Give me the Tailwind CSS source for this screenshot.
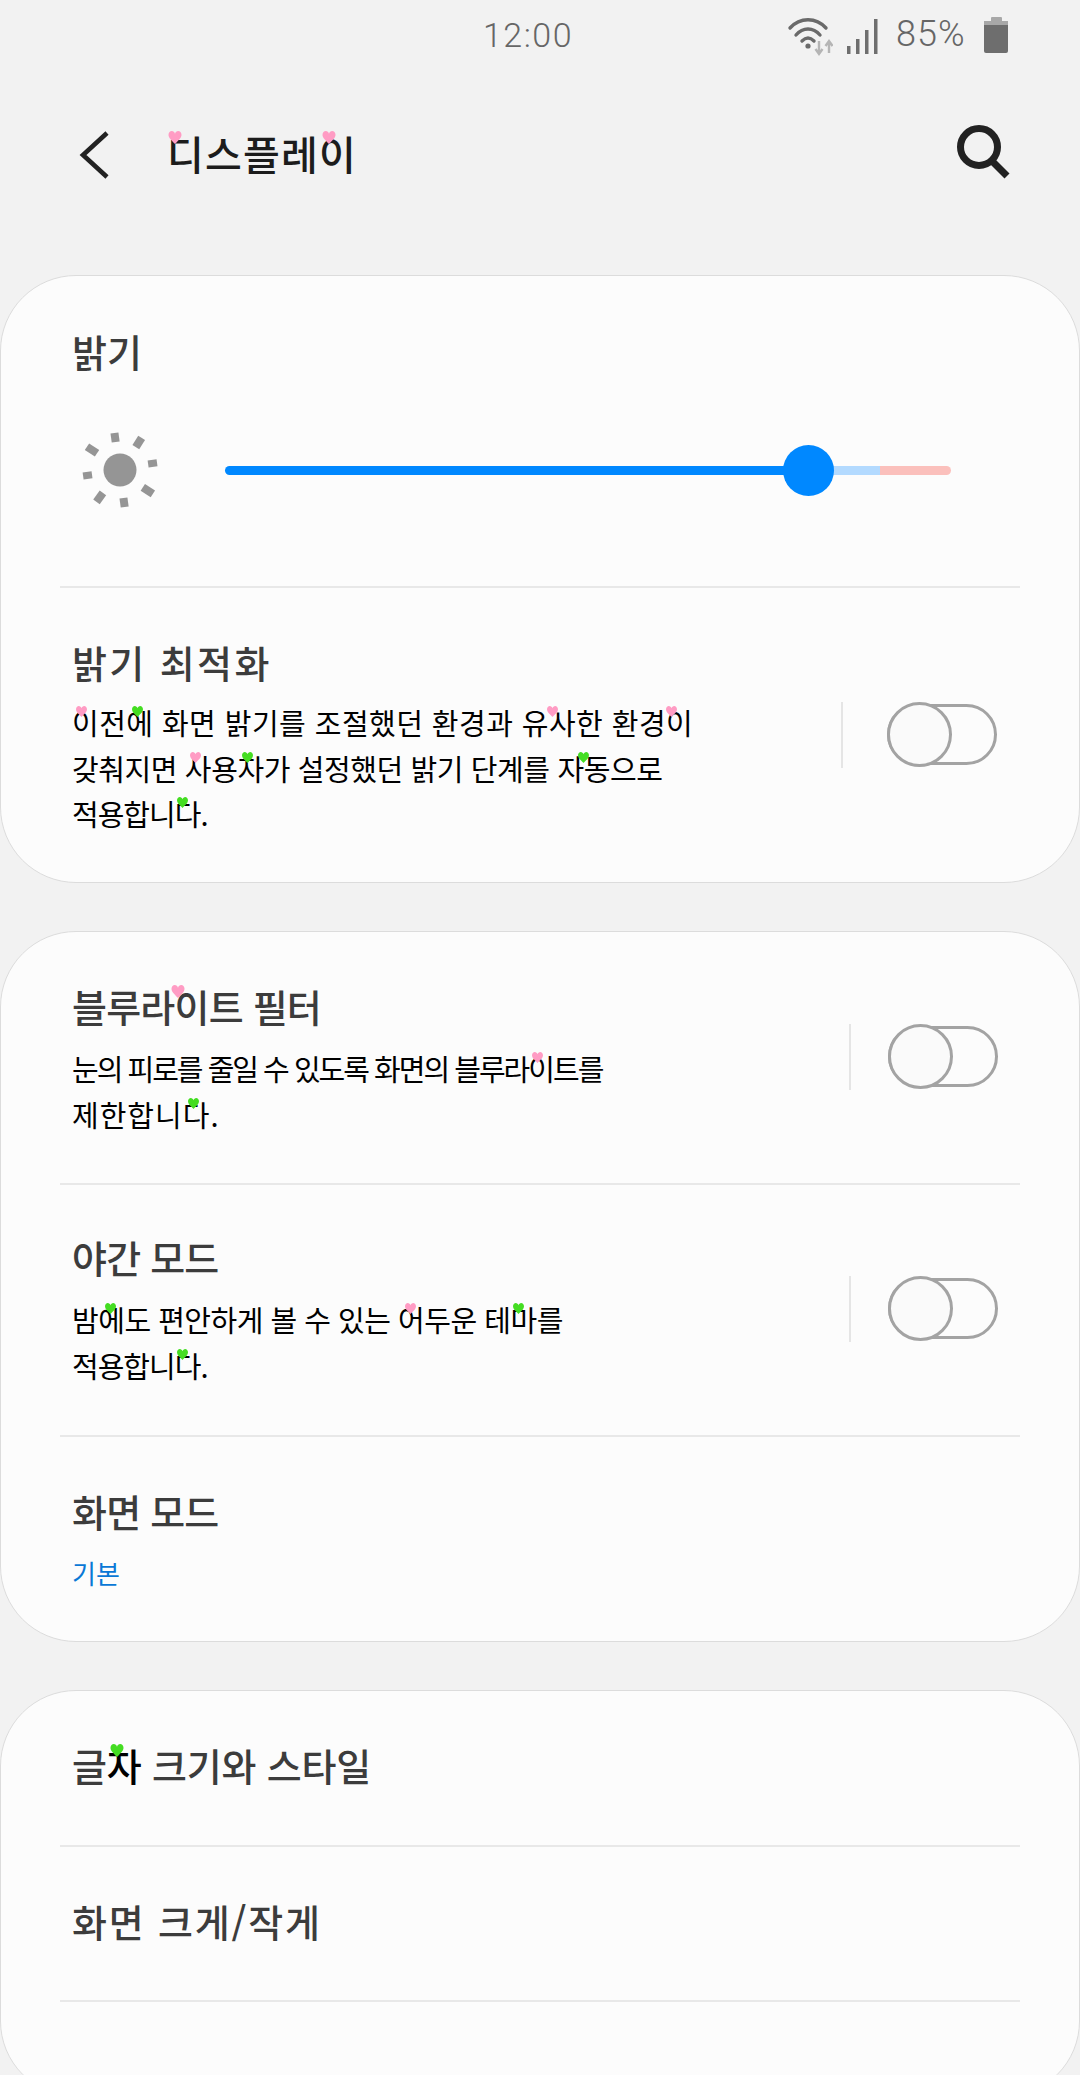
<!DOCTYPE html>
<html lang="ko">
<head>
<meta charset="utf-8">
<script src="https://cdn.jsdelivr.net/npm/@tailwindcss/browser@4"></script>
<title>디스플레이</title>
</head>
<body class="m-0">
<div class="w-[1080px] h-[2075px] overflow-hidden bg-[#f2f2f2] font-['Noto_Sans_CJK_KR','Noto_Sans',sans-serif]">

  <!-- status bar -->
  <div class="h-[70px] flex items-start relative">
    <div class="ml-[483px] mt-[12px] w-[90px] text-[34px] leading-[46px] font-['Roboto',sans-serif] font-light text-[#666666] tracking-[1.5px]">12:00</div>
    <svg class="ml-[214px] mt-[15px]" width="46" height="42" viewBox="0 0 46 42" fill="none">
      <path d="M3 13 C13 2 29 2 39 13" stroke="#6a6a6a" stroke-width="3.4" stroke-linecap="round"/>
      <path d="M9 20 C16 12 26 12 33 20" stroke="#6a6a6a" stroke-width="3.4" stroke-linecap="round"/>
      <path d="M15 26 C19 22 23 22 27 26" stroke="#6a6a6a" stroke-width="3.4" stroke-linecap="round"/>
      <circle cx="21" cy="31" r="2.6" fill="#6a6a6a"/>
      <path d="M32 26 V38 M28.5 34 L32 39 L35.5 34" stroke="#b5b5b5" stroke-width="2.4"/>
      <path d="M42 38 V27 M38.5 31 L42 26 L45.5 31" stroke="#b5b5b5" stroke-width="2.4"/>
    </svg>
    <svg class="ml-[13px] mt-[19px]" width="32" height="35" viewBox="0 0 32 35" fill="#6e6e6e">
      <rect x="1" y="27" width="3.5" height="8"/>
      <rect x="10" y="20" width="3.5" height="15"/>
      <rect x="19" y="11" width="3.5" height="24"/>
      <rect x="28" y="0" width="3.5" height="35"/>
    </svg>
    <div class="ml-[18px] mt-[11px] w-[71px] text-[36px] leading-[46px] font-['Roboto',sans-serif] font-light text-[#666666] tracking-[1px] whitespace-nowrap">85%</div>
    <div class="ml-[17px] mt-[17px] w-[24px] h-[36px] flex flex-col items-center">
      <div class="w-[11px] h-[4px] bg-[#a8a8a8] rounded-t-[1px]"></div>
      <div class="w-[24px] h-[4px] bg-[#a8a8a8]"></div>
      <div class="w-[24px] h-[28px] bg-[#6e6e6e] rounded-b-[2px]"></div>
    </div>
  </div>

  <!-- header -->
  <div class="h-[205px] flex items-start">
    <svg class="ml-[78px] mt-[60px]" width="32" height="50" viewBox="0 0 32 50" fill="none">
      <path d="M29 3 L5 25 L29 47" stroke="#222222" stroke-width="4.6"/>
    </svg>
    <div class="ml-[57px] mt-[53px] w-[190px] text-[40px] leading-[60px] font-medium text-[#1c1c1c] tracking-[1.2px] whitespace-nowrap">
      <span class="relative">디<svg class="absolute left-[1px] top-[7px]" width="14" height="13" viewBox="0 0 12 12"><path fill="#ff9cc4" d="M6 12 C2 8 0 6 0 3.5 C0 1.5 1.5 0 3 0 C4.5 0 5.5 1 6 2.5 C6.5 1 7.5 0 9 0 C10.5 0 12 1.5 12 3.5 C12 6 10 8 6 12Z"/></svg></span>스플레<span class="relative">이<svg class="absolute left-[3px] top-[7px]" width="14" height="13" viewBox="0 0 12 12"><path fill="#ff9cc4" d="M6 12 C2 8 0 6 0 3.5 C0 1.5 1.5 0 3 0 C4.5 0 5.5 1 6 2.5 C6.5 1 7.5 0 9 0 C10.5 0 12 1.5 12 3.5 C12 6 10 8 6 12Z"/></svg></span>
    </div>
    <svg class="ml-[598px] mt-[53px]" width="56" height="56" viewBox="0 0 56 56" fill="none">
      <circle cx="24" cy="24" r="18.5" stroke="#222222" stroke-width="7"/>
      <path d="M36 37 L52 53" stroke="#222222" stroke-width="7"/>
    </svg>
  </div>

  <!-- card 1 -->
  <div class="h-[608px] bg-[#fcfcfc] border border-[#dcdcdc] rounded-[76px] px-[59px]">
    <div class="h-[312px] border-b-2 border-[#e8e8e8] pt-[45px]">
      <div class="text-[38px] leading-[60px] font-medium text-[#3c3c3c] ml-[12px] tracking-[0px]">밝기</div>
      <div class="mt-[59px] flex items-center h-[60px]">
        <svg class="ml-[20px]" width="80" height="80" viewBox="0 0 80 80" fill="#959595">
          <circle cx="40" cy="40" r="16.5"/>
          <rect x="31" y="3" width="8" height="9" transform="rotate(-8 35 7)"/>
          <rect x="55" y="7" width="8" height="11" transform="rotate(32 59 12)"/>
          <rect x="68" y="30" width="9" height="7" transform="rotate(-8 72 33)"/>
          <rect x="63" y="55" width="8" height="12" transform="rotate(-57 67 60)"/>
          <rect x="40" y="68" width="8" height="9" transform="rotate(-8 44 72)"/>
          <rect x="16" y="62" width="8" height="11" transform="rotate(36 20 67)"/>
          <rect x="3" y="42" width="9" height="7" transform="rotate(-8 7 45)"/>
          <rect x="8" y="14" width="8" height="12" transform="rotate(-57 12 20)"/>
        </svg>
        <div class="ml-[65px] relative w-[726px] h-[9px] flex rounded-full">
          <div class="w-[584px] bg-[#0088ff] rounded-l-full"></div>
          <div class="w-[71px] bg-[#b3daff]"></div>
          <div class="w-[71px] bg-[#fbc0bc] rounded-r-full"></div>
          <div class="absolute left-[558px] top-[-21px] w-[51px] h-[51px] rounded-full bg-[#0088ff]"></div>
        </div>
      </div>
    </div>
    <div class="flex items-start">
      <div class="ml-[12px] pt-[44px] w-[780px] shrink-0">
        <div class="text-[38px] leading-[60px] font-medium text-[#3c3c3c] tracking-[2.4px]">밝기 최적화</div>
        <div class="text-[29px] leading-[45.5px] text-black whitespace-nowrap mt-[8px]">
          <div class="tracking-[0.45px]"><span class="relative">이<svg class="absolute left-[4px] top-[5px]" width="11" height="11" viewBox="0 0 12 12"><path fill="#ff9cc4" d="M6 12 C2 8 0 6 0 3.5 C0 1.5 1.5 0 3 0 C4.5 0 5.5 1 6 2.5 C6.5 1 7.5 0 9 0 C10.5 0 12 1.5 12 3.5 C12 6 10 8 6 12Z"/></svg></span>전<span class="relative">에<svg class="absolute left-[6px] top-[5px]" width="11" height="11" viewBox="0 0 12 12"><path fill="#44dd22" d="M6 12 C2 8 0 6 0 3.5 C0 1.5 1.5 0 3 0 C4.5 0 5.5 1 6 2.5 C6.5 1 7.5 0 9 0 C10.5 0 12 1.5 12 3.5 C12 6 10 8 6 12Z"/></svg></span> 화면 밝기를 조절했던 환경과 유<span class="relative">사<svg class="absolute left-[-2px] top-[5px]" width="11" height="11" viewBox="0 0 12 12"><path fill="#ff9cc4" d="M6 12 C2 8 0 6 0 3.5 C0 1.5 1.5 0 3 0 C4.5 0 5.5 1 6 2.5 C6.5 1 7.5 0 9 0 C10.5 0 12 1.5 12 3.5 C12 6 10 8 6 12Z"/></svg></span>한 환경<span class="relative">이<svg class="absolute left-[0px] top-[5px]" width="11" height="11" viewBox="0 0 12 12"><path fill="#ff9cc4" d="M6 12 C2 8 0 6 0 3.5 C0 1.5 1.5 0 3 0 C4.5 0 5.5 1 6 2.5 C6.5 1 7.5 0 9 0 C10.5 0 12 1.5 12 3.5 C12 6 10 8 6 12Z"/></svg></span></div>
          <div class="tracking-[-0.4px]">갖춰지면 <span class="relative">사<svg class="absolute left-[5px] top-[5px]" width="11" height="11" viewBox="0 0 12 12"><path fill="#ff9cc4" d="M6 12 C2 8 0 6 0 3.5 C0 1.5 1.5 0 3 0 C4.5 0 5.5 1 6 2.5 C6.5 1 7.5 0 9 0 C10.5 0 12 1.5 12 3.5 C12 6 10 8 6 12Z"/></svg></span>용<span class="relative">자<svg class="absolute left-[5px] top-[5px]" width="11" height="11" viewBox="0 0 12 12"><path fill="#44dd22" d="M6 12 C2 8 0 6 0 3.5 C0 1.5 1.5 0 3 0 C4.5 0 5.5 1 6 2.5 C6.5 1 7.5 0 9 0 C10.5 0 12 1.5 12 3.5 C12 6 10 8 6 12Z"/></svg></span>가 설정했던 밝기 단계를 <span class="relative">자<svg class="absolute left-[21px] top-[5px]" width="11" height="11" viewBox="0 0 12 12"><path fill="#44dd22" d="M6 12 C2 8 0 6 0 3.5 C0 1.5 1.5 0 3 0 C4.5 0 5.5 1 6 2.5 C6.5 1 7.5 0 9 0 C10.5 0 12 1.5 12 3.5 C12 6 10 8 6 12Z"/></svg></span>동으로</div>
          <div class="tracking-[-1px]">적용합니<span class="relative">다<svg class="absolute left-[2px] top-[5px]" width="11" height="11" viewBox="0 0 12 12"><path fill="#44dd22" d="M6 12 C2 8 0 6 0 3.5 C0 1.5 1.5 0 3 0 C4.5 0 5.5 1 6 2.5 C6.5 1 7.5 0 9 0 C10.5 0 12 1.5 12 3.5 C12 6 10 8 6 12Z"/></svg></span>.</div>
        </div>
      </div>
      <div class="w-[2px] h-[66px] bg-[#e5e5e5] mt-[114px] shrink-0 -ml-[11px]"></div>
      <div class="relative w-[110px] h-[61px] ml-[44px] mt-[116px] shrink-0 border-[3px] border-[#a3a3a3] rounded-full">
        <div class="absolute left-[-3px] top-[-5px] w-[65px] h-[65px] rounded-full border-[3.5px] border-[#a3a3a3] bg-[#fafafa]"></div>
      </div>
    </div>
  </div>

  <!-- card 2 -->
  <div class="mt-[48px] h-[711px] bg-[#fcfcfc] border border-[#dcdcdc] rounded-[76px] px-[59px]">
    <div class="h-[253px] border-b-2 border-[#e8e8e8] flex items-start">
      <div class="ml-[12px] pt-[44px] w-[788px] shrink-0">
        <div class="text-[38px] leading-[60px] font-medium text-[#3c3c3c] tracking-[-0.8px]">블루라<span class="relative">이<svg class="absolute left-[-3px] top-[7px]" width="14" height="13" viewBox="0 0 12 12"><path fill="#ff9cc4" d="M6 12 C2 8 0 6 0 3.5 C0 1.5 1.5 0 3 0 C4.5 0 5.5 1 6 2.5 C6.5 1 7.5 0 9 0 C10.5 0 12 1.5 12 3.5 C12 6 10 8 6 12Z"/></svg></span>트 필터</div>
        <div class="text-[29px] leading-[45.5px] text-black whitespace-nowrap mt-[10px]">
          <div class="tracking-[-2px]">눈의 피로를 줄일 수 있도록 화면의 블루라<span class="relative">이<svg class="absolute left-[4px] top-[5px]" width="11" height="11" viewBox="0 0 12 12"><path fill="#ff9cc4" d="M6 12 C2 8 0 6 0 3.5 C0 1.5 1.5 0 3 0 C4.5 0 5.5 1 6 2.5 C6.5 1 7.5 0 9 0 C10.5 0 12 1.5 12 3.5 C12 6 10 8 6 12Z"/></svg></span>트를</div>
          <div class="tracking-[1px]">제한합니<span class="relative">다<svg class="absolute left-[5px] top-[5px]" width="11" height="11" viewBox="0 0 12 12"><path fill="#44dd22" d="M6 12 C2 8 0 6 0 3.5 C0 1.5 1.5 0 3 0 C4.5 0 5.5 1 6 2.5 C6.5 1 7.5 0 9 0 C10.5 0 12 1.5 12 3.5 C12 6 10 8 6 12Z"/></svg></span>.</div>
        </div>
      </div>
      <div class="w-[2px] h-[66px] bg-[#e5e5e5] mt-[92px] shrink-0 -ml-[11px]"></div>
      <div class="relative w-[110px] h-[61px] ml-[37px] mt-[94px] shrink-0 border-[3px] border-[#a3a3a3] rounded-full">
        <div class="absolute left-[-3px] top-[-5px] w-[65px] h-[65px] rounded-full border-[3.5px] border-[#a3a3a3] bg-[#fafafa]"></div>
      </div>
    </div>
    <div class="h-[252px] border-b-2 border-[#e8e8e8] flex items-start">
      <div class="ml-[12px] pt-[42px] w-[788px] shrink-0">
        <div class="text-[38px] leading-[60px] font-medium text-[#3c3c3c] tracking-[-0.8px]">야간 모드</div>
        <div class="text-[29px] leading-[45.5px] text-black whitespace-nowrap mt-[10px]">
          <div class="tracking-[-0.5px]">밤<span class="relative">에<svg class="absolute left-[7px] top-[5px]" width="11" height="11" viewBox="0 0 12 12"><path fill="#44dd22" d="M6 12 C2 8 0 6 0 3.5 C0 1.5 1.5 0 3 0 C4.5 0 5.5 1 6 2.5 C6.5 1 7.5 0 9 0 C10.5 0 12 1.5 12 3.5 C12 6 10 8 6 12Z"/></svg></span>도 편안하게 볼 수 있는 <span class="relative">어<svg class="absolute left-[7px] top-[5px]" width="11" height="11" viewBox="0 0 12 12"><path fill="#ff9cc4" d="M6 12 C2 8 0 6 0 3.5 C0 1.5 1.5 0 3 0 C4.5 0 5.5 1 6 2.5 C6.5 1 7.5 0 9 0 C10.5 0 12 1.5 12 3.5 C12 6 10 8 6 12Z"/></svg></span>두운 테<span class="relative">마<svg class="absolute left-[3px] top-[5px]" width="11" height="11" viewBox="0 0 12 12"><path fill="#44dd22" d="M6 12 C2 8 0 6 0 3.5 C0 1.5 1.5 0 3 0 C4.5 0 5.5 1 6 2.5 C6.5 1 7.5 0 9 0 C10.5 0 12 1.5 12 3.5 C12 6 10 8 6 12Z"/></svg></span>를</div>
          <div class="tracking-[-1px]">적용합니<span class="relative">다<svg class="absolute left-[2px] top-[5px]" width="11" height="11" viewBox="0 0 12 12"><path fill="#44dd22" d="M6 12 C2 8 0 6 0 3.5 C0 1.5 1.5 0 3 0 C4.5 0 5.5 1 6 2.5 C6.5 1 7.5 0 9 0 C10.5 0 12 1.5 12 3.5 C12 6 10 8 6 12Z"/></svg></span>.</div>
        </div>
      </div>
      <div class="w-[2px] h-[66px] bg-[#e5e5e5] mt-[91px] shrink-0 -ml-[11px]"></div>
      <div class="relative w-[110px] h-[61px] ml-[37px] mt-[93px] shrink-0 border-[3px] border-[#a3a3a3] rounded-full">
        <div class="absolute left-[-3px] top-[-5px] w-[65px] h-[65px] rounded-full border-[3.5px] border-[#a3a3a3] bg-[#fafafa]"></div>
      </div>
    </div>
    <div class="pl-[12px] pt-[44px]">
      <div class="text-[38px] leading-[60px] font-medium text-[#3c3c3c] tracking-[-0.8px]">화면 모드</div>
      <div class="text-[26px] leading-[40px] text-[#0a78d6] mt-[12px]">기본</div>
    </div>
  </div>

  <!-- card 3 -->
  <div class="mt-[48px] h-[407px] bg-[#fcfcfc] border border-[#dcdcdc] rounded-[76px] px-[59px]">
    <div class="h-[156px] border-b-2 border-[#e8e8e8] pl-[12px] pt-[44px]">
      <div class="text-[38px] leading-[60px] font-medium text-[#3c3c3c] tracking-[-0.2px]">글<span class="relative text-black">자<svg class="absolute left-[3px] top-[7px]" width="14" height="13" viewBox="0 0 12 12"><path fill="#44dd22" d="M6 12 C2 8 0 6 0 3.5 C0 1.5 1.5 0 3 0 C4.5 0 5.5 1 6 2.5 C6.5 1 7.5 0 9 0 C10.5 0 12 1.5 12 3.5 C12 6 10 8 6 12Z"/></svg></span> 크기와 스타일</div>
    </div>
    <div class="h-[155px] border-b-2 border-[#e8e8e8] pl-[12px] pt-[44px]">
      <div class="text-[38px] leading-[60px] font-medium text-[#3c3c3c] tracking-[1.8px]">화면 크게/작게</div>
    </div>
  </div>
</div>
</body>
</html>
